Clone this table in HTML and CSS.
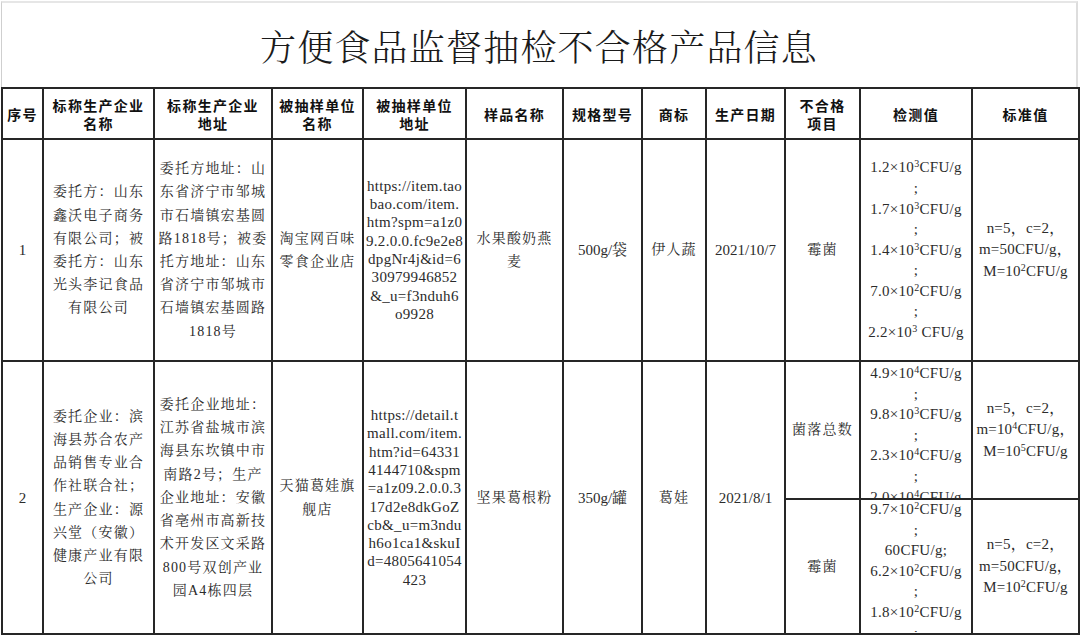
FILE: index.html
```html
<!DOCTYPE html>
<html lang="zh-CN">
<head>
<meta charset="utf-8">
<title>方便食品监督抽检不合格产品信息</title>
<link rel="stylesheet" href="styles.css">
</head>
<body>
<div class="sheet">
  <div class="title">方便食品监督抽检不合格产品信息</div>
  <table class="grid">
    <colgroup>
      <col class="w1"><col class="w2"><col class="w3"><col class="w4"><col class="w5"><col class="w6">
      <col class="w7"><col class="w8"><col class="w9"><col class="w10"><col class="w11"><col class="w12">
    </colgroup>
    <thead>
      <tr class="head">
        <th>序号</th>
        <th>标称生产企业<br>名称</th>
        <th>标称生产企业<br>地址</th>
        <th>被抽样单位<br>名称</th>
        <th>被抽样单位<br>地址</th>
        <th>样品名称</th>
        <th>规格型号</th>
        <th>商标</th>
        <th>生产日期</th>
        <th>不合格<br>项目</th>
        <th>检测值</th>
        <th>标准值</th>
      </tr>
    </thead>
    <tbody>
      <tr class="r1">
        <td class="lat">1</td>
        <td class="cjk">委托方：山东<br>鑫沃电子商务<br>有限公司；被<br>委托方：山东<br>光头李记食品<br>有限公司</td>
        <td class="cjk">委托方地址：山<br>东省济宁市邹城<br>市石墙镇宏基圆<br>路1818号；被委<br>托方地址：山东<br>省济宁市邹城市<br>石墙镇宏基圆路<br>1818号</td>
        <td class="cjk">淘宝网百味<br>零食企业店</td>
        <td class="url">https://item.tao<br>bao.com/item.<br>htm?spm=a1z0<br>9.2.0.0.fc9e2e8<br>dpgNr4j&amp;id=6<br>30979946852<br>&amp;_u=f3nduh6<br>o9928</td>
        <td class="cjk">水果酸奶燕<br>麦</td>
        <td class="lat">500g/袋</td>
        <td class="cjk">伊人蔬</td>
        <td class="lat">2021/10/7</td>
        <td class="cjk">霉菌</td>
        <td class="val">1.2×10<sup>3</sup>CFU/g<br>;<br>1.7×10<sup>3</sup>CFU/g<br>;<br>1.4×10<sup>3</sup>CFU/g<br>;<br>7.0×10<sup>2</sup>CFU/g<br>;<br>2.2×10<sup>3</sup> CFU/g</td>
        <td class="std">n=5，c=2，<br>m=50CFU/g，<br>M=10<sup>2</sup>CFU/g</td>
      </tr>
      <tr class="r2a">
        <td class="lat" rowspan="2">2</td>
        <td class="cjk" rowspan="2">委托企业：滨<br>海县苏合农产<br>品销售专业合<br>作社联合社；<br>生产企业：源<br>兴堂（安徽）<br>健康产业有限<br>公司</td>
        <td class="cjk" rowspan="2">委托企业地址：<br>江苏省盐城市滨<br>海县东坎镇中市<br>南路2号；生产<br>企业地址：安徽<br>省亳州市高新技<br>术开发区文采路<br>800号双创产业<br>园A4栋四层</td>
        <td class="cjk" rowspan="2">天猫葛娃旗<br>舰店</td>
        <td class="url" rowspan="2">https://detail.t<br>mall.com/item.<br>htm?id=64331<br>4144710&amp;spm<br>=a1z09.2.0.0.3<br>17d2e8dkGoZ<br>cb&amp;_u=m3ndu<br>h6o1ca1&amp;skuI<br>d=4805641054<br>423</td>
        <td class="cjk" rowspan="2">坚果葛根粉</td>
        <td class="lat" rowspan="2">350g/罐</td>
        <td class="cjk" rowspan="2">葛娃</td>
        <td class="lat" rowspan="2">2021/8/1</td>
        <td class="cjk">菌落总数</td>
        <td class="val clipcell"><div class="clip clip-a">4.9×10<sup>4</sup>CFU/g<br>;<br>9.8×10<sup>3</sup>CFU/g<br>;<br>2.3×10<sup>4</sup>CFU/g<br>;<br>2.0×10<sup>4</sup>CFU/g</div></td>
        <td class="std">n=5，c=2，<br>m=10<sup>4</sup>CFU/g，<br>M=10<sup>5</sup>CFU/g</td>
      </tr>
      <tr class="r2b">
        <td class="cjk">霉菌</td>
        <td class="val clipcell"><div class="clip clip-b">9.7×10<sup>2</sup>CFU/g<br>;<br>60CFU/g;<br>6.2×10<sup>2</sup>CFU/g<br>;<br>1.8×10<sup>2</sup>CFU/g<br>;<br>2.1×10<sup>2</sup>CFU/g</div></td>
        <td class="std">n=5，c=2，<br>m=50CFU/g，<br>M=10<sup>2</sup>CFU/g</td>
      </tr>
    </tbody>
  </table>
</div>
</body>
</html>
```

FILE: styles.css
```css
html, body {
  margin: 0;
  padding: 0;
  background: #ffffff;
}

.sheet {
  margin: 1px 0 0 1px;
  width: 1077px;
}

.title {
  height: 84px;
  border-top: 2px solid #e6e6e6;
  border-left: 1px solid #cfcfcf;
  border-right: 2px solid #dddddd;
  display: flex;
  align-items: center;
  justify-content: center;
  font-family: "Noto Serif CJK SC", "Noto Sans CJK SC", serif;
  font-size: 36px;
  font-weight: 300;
  letter-spacing: 1.2px;
  color: #1a1a1a;
}

.grid {
  border-collapse: collapse;
  table-layout: fixed;
  width: 1077px;
}

.w1 { width: 41px; }
.w2 { width: 111px; }
.w3 { width: 118px; }
.w4 { width: 91px; }
.w5 { width: 103px; }
.w6 { width: 97px; }
.w7 { width: 79px; }
.w8 { width: 64px; }
.w9 { width: 79px; }
.w10 { width: 75px; }
.w11 { width: 112px; }
.w12 { width: 107px; }

.grid th,
.grid td {
  border: 2px solid #262626;
  padding: 0;
  text-align: center;
  vertical-align: middle;
  overflow: hidden;
  white-space: nowrap;
}

.grid th {
  font-family: "Noto Sans CJK SC", "Liberation Sans", sans-serif;
  font-weight: 700;
  font-size: 14px;
  line-height: 18px;
  letter-spacing: 1.3px;
  color: #111111;
}

.head th { height: 49px; }
.r1 td { height: 220px; }
.r2a td { height: 136px; }
.r2b td { height: 133px; }

.grid td {
  color: #2b2b2b;
  font-family: "Liberation Serif", "Noto Serif CJK SC", "Noto Sans CJK SC", serif;
}

.cjk {
  font-size: 14px;
  line-height: 23.2px;
  letter-spacing: 1.2px;
  padding-top: 3px;
}

.lat {
  font-size: 15px;
  line-height: 20px;
}

.url {
  font-size: 15px;
  line-height: 18.3px;
  letter-spacing: 0.3px;
  padding-top: 2px;
}

.val {
  font-size: 15px;
  line-height: 20.6px;
  letter-spacing: 0.3px;
  padding-top: 2px;
}

.std {
  font-size: 15px;
  line-height: 21.5px;
  letter-spacing: 0.2px;
  padding-top: 2px;
}

.grid sup {
  font-size: 10px;
  line-height: 0;
  vertical-align: 5px;
}

.clipcell {
  vertical-align: top;
}

.grid td.clipcell {
  padding-top: 0;
}

.clip {
  overflow: hidden;
}

.clip-a {
  height: 136px;
  padding-top: 1px;
  box-sizing: border-box;
}

.clip-b {
  height: 133px;
  margin-top: -2px;
  padding-top: 0;
}
```
